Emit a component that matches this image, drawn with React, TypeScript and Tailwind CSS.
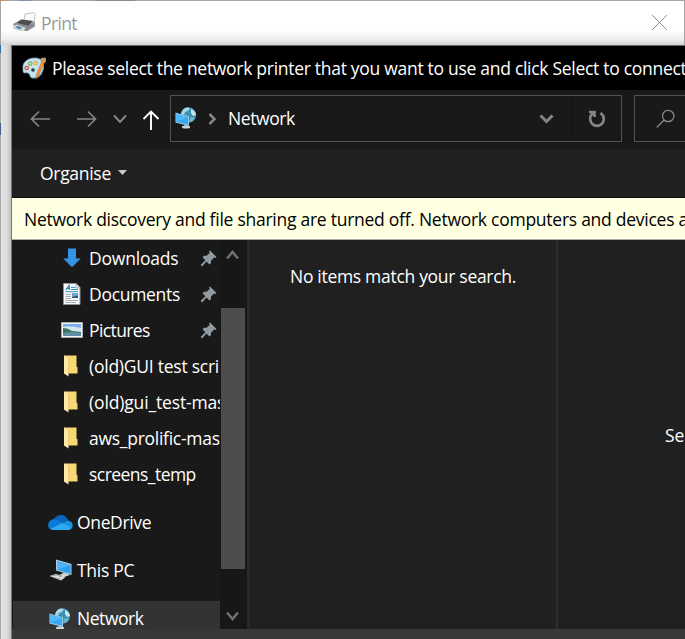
import type { ReactNode } from "react";

function Printer() {
  return (
    <svg width="25" height="22" viewBox="0 0 25 22">
      <path d="M13 2L22 0.5L23.5 2L22 10L12 8Z" fill="#fafafa" stroke="#b5b5b5" strokeWidth="0.8" />
      <path d="M1 12L9 7.5L23 9.5V15L15 19.5L1 16Z" fill="#b9bcbe" />
      <path d="M4 11L9.5 7.5L21 9L16.5 14Z" fill="#4c4e50" />
      <path d="M1 12L4 11L16 14L22.5 10V14L14.500 19Z" fill="#85888b" />
      <path d="M1 14L5 12.500L14 16L10 19.500L1 17Z" fill="#d5dade" />
      <path d="M3 15L6 14L10 15.500L7.500 17.500Z" fill="#4385b8" />
      <path d="M7 16L9.500 15.500L9 17.500Z" fill="#72a860" />
    </svg>
  );
}

function Palette() {
  return (
    <svg width="26" height="24" viewBox="0 0 26 24">
      <path d="M1 13C0 6 6 2 13 2C19 2 22 6 21.500 11C21 17 17 22 11 22C7 22 9 18 6 17C3 16 1 19 1 13Z" fill="#c5e2f2" stroke="#7eb8d5" strokeWidth="0.8" />
      <circle cx="4.700" cy="12" r="1.700" fill="none" stroke="#e25745" strokeWidth="1.300" />
      <circle cx="8.200" cy="7.600" r="1.700" fill="none" stroke="#78b94e" strokeWidth="1.300" />
      <circle cx="13.500" cy="7" r="1.700" fill="none" stroke="#f0ae38" strokeWidth="1.300" />
      <circle cx="11" cy="14" r="1.800" fill="#253d4f" />
      <path d="M20 17C19 20 15 22 12 22" stroke="#4da3ce" fill="none" />
      <path d="M14 23L14.500 18L20 5L22.500 6L17 19Z" fill="#ee9138" stroke="#b8672a" strokeWidth="0.500" />
      <path d="M19 6C17 3 19 1 24 2C24 5 24 7 22 7Z" fill="#c69a67" />
    </svg>
  );
}

function NetworkIcon() {
  return (
    <svg width="22" height="22" viewBox="0 0 22 22">
      <circle cx="13.500" cy="8" r="7.700" fill="#3f91b3" />
      <path d="M7 4C9 0 13 0 15 1L13 4L10 5L9 8L6 7Z" fill="#a9d9e6" />
      <path d="M16 2C19 3 21 6 21 8L18 9L16 6Z" fill="#c4e6eb" />
      <path d="M16 10L20 11C18 14 16 15 14 15Z" fill="#72b7cb" />
      <path d="M9.500 16H13L12 20H9Z" fill="#8a9da7" />
      <ellipse cx="11" cy="20" rx="4.200" ry="1.500" fill="#cbd5da" />
      <path d="M0.500 5.500L14 9.500V19L0.500 15.500Z" fill="#b6d5e4" />
      <path d="M1 6.500L13.200 10V18L1 14.800Z" fill="#35a9f5" />
      <path d="M1 6.500L13.200 10L1 14.800Z" fill="#51b9fa" />
    </svg>
  );
}

function Pin() {
  return (
    <svg width="16" height="17" viewBox="0 0 16 17" fill="#8f9aa2">
      <path d="M9 0.500L15.500 7L14.500 8L13 7.500L10 10.800V13L8.500 14.500L5.500 11.500L1.500 16H0V14.500L4.300 10.300L1.500 7.300L3 5.800H5.500L8.700 3L8 1.500Z" />
    </svg>
  );
}

function Down() {
  return (
    <svg width="18" height="20" viewBox="0 0 18 20">
      <path d="M5 0.500H13V10.500H17.800L9 19.300L0.200 10.500H5Z" fill="#3493e6" />
    </svg>
  );
}

function Doc() {
  return (
    <svg width="18" height="22" viewBox="0 0 18 22">
      <path d="M0.500 0.500H13L17 4.500V21.500H0.500Z" fill="#f6f8f9" stroke="#8d9498" />
      <path d="M13 0.500V5H17" fill="#dce1e4" stroke="#9ca3a7" strokeWidth="0.800" />
      <path d="M3 7L6 2.500L6.500 7M4 5.500H6.500" stroke="#1684bf" strokeWidth="1.200" fill="none" />
      <path d="M8 4.500H12M8 6.500H15M2.500 8.700H15" stroke="#3295c5" />
      <path d="M2.500 11.500H8M2.500 13.500H8M2.500 15.500H8M2.500 17.500H15M2.500 19.500H13" stroke="#a7adb1" />
      <path d="M9 10.500H15V15H9Z" fill="#315b7d" />
      <path d="M9 10.500H15V12.500L9 14Z" fill="#6ba5d5" />
    </svg>
  );
}

function Picture() {
  return (
    <svg width="22" height="16" viewBox="0 0 22 16">
      <path d="M0.500 0.500H21.500V15.500H0.500Z" fill="#f1f5f7" stroke="#a9adaf" />
      <path d="M2 2H20V14H2Z" fill="#79aee8" />
      <path d="M2 5Q8 3 20 6V10H2Z" fill="#d4e7ef" />
      <path d="M2 6Q7 6 11 9L20 10V12H2Z" fill="#3e715e" />
      <path d="M2 11Q12 9 20 11V14H2Z" fill="#608fa7" />
    </svg>
  );
}

function Folder() {
  return (
    <svg className="mr-1" width="15" height="22" viewBox="0 0 15 22">
      <path d="M1 0.500H13.500V11.500L14.500 12.500V18.500H1Z" fill="#f7d675" />
      <path d="M1 0.500L5.500 3V21.500L1 18.500Z" fill="#ffe9a8" />
      <path d="M5.500 3V18.500" stroke="#e3ba59" strokeWidth="0.600" />
    </svg>
  );
}

function Cloud() {
  return (
    <svg width="25" height="17" viewBox="0 0 25 17">
      <path d="M6 5C8 1.500 11 0.500 14 1C17 1.300 19 3.500 20 6L15 9L6 5Z" fill="#0865bc" />
      <path d="M5 16C1.500 16 0.200 13.500 0.200 11C0.200 8 2.500 5.500 6 5C8.500 5 11 6.500 15 9L5 16Z" fill="#087bd7" />
      <path d="M15 9L19 6.500C22.500 6.500 24.700 9 24.700 11.500C24.700 12.500 24.400 13.200 24 14Z" fill="#1594df" />
      <path d="M2.500 15L14.500 8.700L24 13.700C23 15.300 21.500 16 20 16H5Z" fill="#2cabee" />
    </svg>
  );
}

function Computer() {
  return (
    <svg width="23" height="22" viewBox="0 0 23 22">
      <path d="M7 0.500L22.500 5V16L7 11.500Z" fill="#b7cbd7" />
      <path d="M8 2L21.700 6V14.700L8 10.700Z" fill="#2e9fec" />
      <path d="M8 2L21.700 6L8 10.700Z" fill="#4fb4f7" />
      <path d="M14 13L17 14L16 17L12 16Z" fill="#9aabb6" />
      <path d="M10.500 15.500L17 14L21 16L15 18Z" fill="#ccd5db" />
      <path d="M0.500 17L7 15L16.500 18L12 21.500Z" fill="#e1e5e8" />
      <path d="M3 17L7 16L13 18M5 18.500L12 20" stroke="#8c969e" strokeWidth="0.800" fill="none" />
    </svg>
  );
}

function Row({ icon, pinned, text, cls }: { icon: ReactNode; pinned?: boolean; text: string; cls: string }) {
  return (
    <div className="flex h-9 shrink-0 items-center overflow-hidden pl-[47px]">
      <span className="flex w-[26px] shrink-0 justify-center">{icon}</span>
      <span className={"ml-1 whitespace-pre pb-px " + cls}>{text}</span>
      {pinned && <span className="ml-auto mr-[3px]"><Pin /></span>}
    </div>
  );
}

function RootRow({ icon, text, cls, selected }: { icon: ReactNode; text: string; cls: string; selected?: boolean }) {
  return (
    <div className={"mt-3 flex h-9 shrink-0 items-center " + (selected ? "ml-px border-t border-[#1a1a1a] bg-[#333] pl-[34px]" : "pl-[35px]")}>
      <span className="flex w-[26px] justify-center">{icon}</span>
      <span className={"ml-1 whitespace-pre pb-px " + cls}>{text}</span>
    </div>
  );
}

export default function App() {
  return (
    <div className="flex h-[639px] w-[685px] flex-col overflow-hidden whitespace-nowrap bg-[#dedede] font-['Open_Sans','Noto_Sans',sans-serif] text-[17.500px] leading-6 text-white">
      <div className="flex h-px shrink-0 bg-[#a5a5a5]">
        <i className="w-[3px] bg-[#d38a54]" /><i className="ml-4 w-3 bg-[#8290b0]" /><i className="ml-16 w-10 bg-[#8b8b8b]" />
      </div>
      <header className="flex h-11 shrink-0 items-center border-x border-[#a5a5a5] bg-[linear-gradient(#fff_67%,#eee_88%,#d2d2d2)] text-[#999]">
        <span className="ml-[11px]"><Printer /></span>
        <span className="ml-1 pb-px tracking-[-0.650px]">Print</span>
        <svg className="mb-px ml-auto mr-4" width="17" height="17" viewBox="0 0 17 17" stroke="#8c8c8c" fill="none"><path d="M1 1L16 16M16 1L1 16" /></svg>
      </header>
      <div className="flex min-h-0 flex-1">
        <div className="flex w-3 shrink-0 border-r border-[#777] bg-[linear-gradient(90deg,#e4e4e4,#dcdcdc_65%,#bebebe)]">
          <div className="flex w-px flex-col bg-[#a8a8a8]"><i className="h-2 bg-[#2d6ca5]" /><i className="mt-[70px] h-3 bg-[#465d90]" /></div>
        </div>
        <main className="flex min-w-0 flex-1 flex-col border-t border-[#666] bg-[#202020]">
          <div className="flex h-11 shrink-0 items-center bg-black">
            <span className="ml-[10px]"><Palette /></span>
            <span className="ml-1 pb-px tracking-[-0.290px]">Please select the network printer that you want to use and click Select to connect</span>
          </div>
          <nav className="flex h-[59px] shrink-0 items-center bg-[#191919] pb-[2px]">
            <svg className="ml-[18px] shrink-0" width="22" height="18" viewBox="0 0 22 18" fill="none" stroke="#858585" strokeWidth="1.700"><path d="M20 9H2M9 1.500L1.500 9L9 16.500" /></svg>
            <svg className="ml-6 shrink-0" width="22" height="18" viewBox="0 0 22 18" fill="none" stroke="#858585" strokeWidth="1.700"><path d="M1 9H19M12 1.500L19.500 9L12 16.500" /></svg>
            <svg className="ml-[15px] shrink-0" width="14" height="10" viewBox="0 0 14 10" fill="none" stroke="#858585" strokeWidth="2"><path d="M1 1.500L7 8L13 1.500" /></svg>
            <svg className="ml-[15px] mt-[2px] shrink-0" width="18" height="20" viewBox="0 0 18 20" fill="none" stroke="#fff" strokeWidth="1.900"><path d="M9 20V2M1.500 9L9 1.500L16.500 9" /></svg>
            <div className="ml-[10px] flex h-[47px] w-[452px] shrink-0 items-center border border-[#535353]">
              <span className="mb-[2px] ml-1"><NetworkIcon /></span>
              <svg className="ml-[11px]" width="9" height="12" viewBox="0 0 9 12" fill="none" stroke="#858585" strokeWidth="2.500"><path d="M1.500 1L6.500 6L1.500 11" /></svg>
              <span className="ml-[11px] pb-px tracking-[-0.400px]">Network</span>
              <svg className="ml-auto mr-[17px]" width="15" height="10" viewBox="0 0 15 10" fill="none" stroke="#858585" strokeWidth="3"><path d="M1.500 1.500L7.500 7.500L13.500 1.500" /></svg>
              <div className="flex h-full w-[50px] items-center border-l border-[#151515] pl-4">
                <svg width="18" height="18" viewBox="0 0 18 18" fill="none" stroke="#858585" strokeWidth="2.600"><path d="M1 2H6.500V7M6 2.600C3.500 4 2 6.500 2.200 9.300A6.800 6.800 0 1 0 12.500 3.200" /></svg>
              </div>
            </div>
            <div className="ml-3 flex h-[47px] w-20 shrink-0 items-center border border-[#535353] pl-[21px]">
              <svg width="19" height="20" viewBox="0 0 19 20" fill="none" stroke="#8b8b8b" strokeWidth="1.200"><circle cx="12.200" cy="7" r="5.700" /><path d="M8 11L0.800 18.500" /></svg>
            </div>
          </nav>
          <div className="flex h-12 shrink-0 items-center">
            <span className="ml-7 tracking-[-0.300px]">Organise</span>
            <svg className="mb-[2px] ml-[7px]" width="9" height="5" viewBox="0 0 9 5"><path d="M0 0H9L4.500 5Z" fill="#ccc" /></svg>
          </div>
          <div className="flex h-[43px] shrink-0 items-center border-b border-t border-b-[#aaa] border-t-[#111] bg-[#ffffe1] pl-3 pt-px tracking-[-0.260px] text-black">Network discovery and file sharing are turned off. Network computers and devices are not visible.</div>
          <div className="flex min-h-0 flex-1">
            <aside className="flex w-[208px] shrink-0 flex-col overflow-hidden bg-[#191919]">
              <Row icon={<Down />} pinned text="Downloads" cls="tracking-[-0.200px]" />
              <Row icon={<Doc />} pinned text="Documents" cls="tracking-[-0.300px]" />
              <Row icon={<Picture />} pinned text="Pictures" cls="tracking-[-0.600px]" />
              <Row icon={<Folder />} text="(old)GUI test scripts" cls="tracking-[-0.240px]" />
              <Row icon={<Folder />} text="(old)gui_test-master" cls="tracking-[-0.150px]" />
              <Row icon={<Folder />} text="aws_prolific-master" cls="tracking-[-0.270px]" />
              <Row icon={<Folder />} text="screens_temp" cls="tracking-[-0.540px]" />
              <RootRow icon={<Cloud />} text="OneDrive" cls="tracking-[-0.350px]" />
              <RootRow icon={<Computer />} text="This PC" cls="tracking-[-0.300px]" />
              <RootRow selected icon={<NetworkIcon />} text="Network" cls="tracking-[-0.450px]" />
            </aside>
            <div className="flex w-[27px] shrink-0 flex-col items-center bg-[#171717] pr-[2px]">
              <svg className="mt-[10px]" width="13" height="10" viewBox="0 0 13 10" fill="none" stroke="#707070" strokeWidth="2.500"><path d="M1 8.500L6.500 2L12 8.500" /></svg>
              <div className="mt-12 h-[261px] w-6 bg-[#4d4d4d]" />
              <svg className="mt-[42px]" width="13" height="10" viewBox="0 0 13 10" fill="none" stroke="#707070" strokeWidth="2.500"><path d="M1 1.500L6.500 8L12 1.500" /></svg>
            </div>
            <div className="w-[3px] shrink-0 bg-[#2a2a2a]" />
            <section className="w-[306px] shrink-0 pl-10 pt-6 tracking-[-0.300px]">No items match your search.</section>
            <div className="w-[2px] shrink-0 bg-[#2d2d2d]" />
            <section className="flex min-w-0 flex-1 items-center overflow-hidden pl-[107px] pt-px">Select a file to preview.</section>
          </div>
          <footer className="h-[10px] shrink-0 bg-[#383838]" />
        </main>
      </div>
    </div>
  );
}
